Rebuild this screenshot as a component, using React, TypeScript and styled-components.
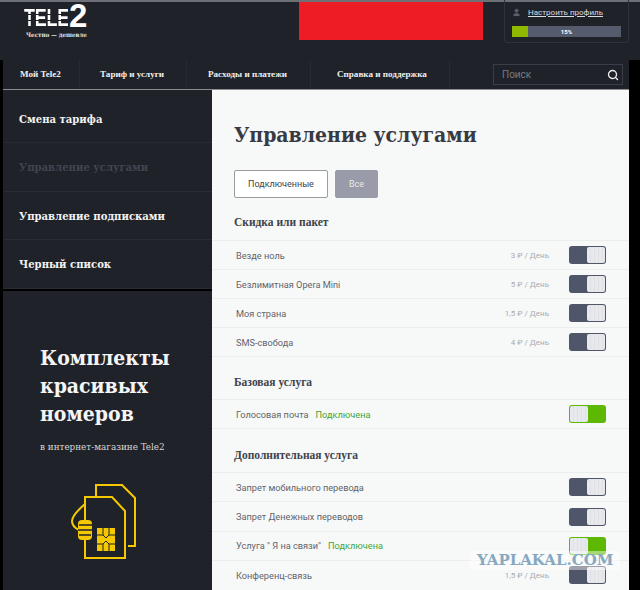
import styled, { createGlobalStyle } from "styled-components"
import { Search, User } from "lucide-react"

const GlobalStyle = createGlobalStyle`
    html, body {
        margin: 0;
        padding: 0;
        background: #000;
    }
    * {
        box-sizing: border-box;
    }
`;

const SLAB = `"DejaVu Serif Condensed", "DejaVu Serif", serif`;
const SERIF = `"Liberation Serif", serif`;
const SANS = `Roboto, "Noto Sans", sans-serif`;

const Page = styled.div`
    position: relative;
    width: 640px;
    height: 590px;
    overflow: hidden;
    background: #000;
    font-family: ${SANS};
`;

const TopBar = styled.header`
    display: flex;
    height: 60px;
    background: #1f2229;
    border-top: 2px solid #6d7076;
`;

const LogoBox = styled.div`
    width: 299px;
    padding: 2px 0 0 24px;
    color: #fff;
`;

const LogoMark = styled.div`
    display: flex;
    align-items: flex-end;
    height: 24px;
    font-family: "Liberation Sans", sans-serif;
    font-weight: 700;
    white-space: nowrap;
`;

const LogoTele = styled.span`
    flex: none;
    width: 57px;
    margin-right: -12px;
    font-size: 23px;
    line-height: 19px;
    letter-spacing: -0.3px;
    transform: scaleX(0.78);
    transform-origin: left bottom;
    background: repeating-linear-gradient(180deg, #fff 0 5px, #1f2229 5px 6px);
    background-clip: text;
    -webkit-background-clip: text;
    color: transparent;
`;

const LogoTwo = styled.span`
    font-size: 33px;
    line-height: 24px;
`;

const Slogan = styled.div`
    margin: 3px 0 0 2px;
    font-family: ${SLAB};
    font-size: 6.2px;
    font-weight: 700;
    color: #e6e6e6;
    white-space: nowrap;
`;

const RedBlock = styled.div`
    width: 184px;
    height: 38px;
    background: #ee1c25;
`;

const ProfileBox = styled.div`
    width: 125px;
    height: 43px;
    margin: -2px 0 0 21px;
    padding: 6px 7px 0;
    border: 1px solid #2f333c;
    border-top: 0;
    border-radius: 0 0 4px 4px;
`;

const ProfileRow = styled.div`
    display: flex;
    align-items: center;
    gap: 7px;
    height: 12px;
    padding-top: 1px;
    color: #5b6171;
`;

const ProfileLink = styled.a`
    font-size: 8px;
    color: #d9dbe0;
    text-decoration: underline;
    white-space: nowrap;
`;

const Progress = styled.div`
    position: relative;
    height: 11px;
    margin-top: 8px;
    background: #555b6d;
    color: #fff;
    font-size: 6px;
    font-weight: 700;
    line-height: 11px;
    text-align: center;
`;

const ProgressFill = styled.div`
    position: absolute;
    left: 0;
    top: 0;
    height: 100%;
    background: #8fb800;
`;

const Shell = styled.div`
    width: 626px;
    margin-left: 3px;
`;

const Nav = styled.nav`
    display: flex;
    align-items: stretch;
    height: 29px;
    background: #1f2229;
`;

const NavItem = styled.div<{ $width: number; $pad: number }>`
    width: ${(p) => p.$width}px;
    padding-left: ${(p) => p.$pad}px;
    border-right: 1px solid #272a32;
    font-family: ${SERIF};
    font-size: 9.1px;
    font-weight: 700;
    line-height: 29px;
    color: #f0f0f0;
    white-space: nowrap;
`;

const SearchBox = styled.div`
    display: flex;
    align-items: center;
    justify-content: space-between;
    width: 130px;
    height: 21px;
    margin: 4px 0 0 43px;
    padding: 0 3px 0 8px;
    border: 1px solid #3a3e48;
    font-size: 10px;
    color: #777b84;
`;

const Columns = styled.div`
    display: flex;
    border-top: 1px solid #8b8d91;
`;

const Sidebar = styled.aside`
    width: 209px;
    flex-shrink: 0;
`;

const Menu = styled.ul`
    margin: 0;
    padding: 0;
    list-style: none;
    background: #1f2229;
`;

const MenuItem = styled.li<{ $active?: boolean }>`
    height: 48.5px;
    padding-left: 16px;
    border-bottom: 1px solid #282b33;
    font-family: ${SLAB};
    font-size: 11.2px;
    font-weight: 700;
    line-height: 48px;
    color: ${(p) => (p.$active ? "#41454f" : "#f2f2f2")};
    &:first-child {
        height: 53px;
        line-height: 58px;
    }
`;

const Promo = styled.section`
    height: 302px;
    margin-top: 2px;
    padding: 53px 0 0 37px;
    background: #1f2229;
`;

const PromoTitle = styled.h2`
    margin: 0;
    font-family: ${SLAB};
    font-size: 21px;
    font-weight: 700;
    line-height: 28px;
    color: #f5f5f5;
`;

const PromoText = styled.p`
    margin: 13px 0 0;
    font-family: ${SLAB};
    font-size: 9.8px;
    color: #d6d6d6;
`;

const SimIcon = styled.svg`
    display: block;
    margin: 31px 0 0 30px;
`;

const Main = styled.main`
    flex: 1;
    height: 501px;
    padding-top: 31px;
    background: #f7f8f8;
`;

const Title = styled.h1`
    margin: 0 0 0 22px;
    height: 28px;
    font-family: ${SLAB};
    font-size: 21px;
    font-weight: 700;
    line-height: 28px;
    color: #373a42;
`;

const Tabs = styled.div`
    display: flex;
    gap: 7px;
    margin: 21px 0 0 22px;
`;

const Tab = styled.div<{ $filled?: boolean }>`
    height: 28px;
    padding: 0 13px;
    border: 1px solid ${(p) => (p.$filled ? "#9a9ba8" : "#9a9da3")};
    border-radius: 2px;
    background: ${(p) => (p.$filled ? "#9a9ba8" : "#fff")};
    font-size: 9px;
    line-height: 26px;
    color: ${(p) => (p.$filled ? "#e8e8ec" : "#40434a")};
`;

const SectionTitle = styled.h3<{ $top: number }>`
    margin: ${(p) => p.$top}px 0 0 22px;
    height: 18px;
    font-family: ${SERIF};
    font-size: 11.5px;
    font-weight: 700;
    line-height: 18px;
    color: #40434b;
`;

const RowList = styled.div<{ $gap: number }>`
    margin-top: ${(p) => p.$gap}px;
    border-top: 1px solid #eceded;
`;

const Row = styled.div`
    display: flex;
    align-items: center;
    height: 29px;
    padding: 0 23px 0 24px;
    border-bottom: 1px solid #eceded;
    font-size: 9.2px;
    color: #62656c;
`;

const TallRowList = styled(RowList)`
    ${Row} {
        height: 29.4px;
    }
`;

const RowName = styled.span`
    white-space: nowrap;
`;

const Connected = styled.span`
    margin-left: 7px;
    color: #3fa535;
`;

const Price = styled.span`
    margin-left: auto;
    font-size: 8px;
    color: #a9abb0;
    white-space: nowrap;
`;

const Toggle = styled.div<{ $on?: boolean; $priced?: boolean }>`
    display: flex;
    justify-content: ${(p) => (p.$on ? "flex-start" : "flex-end")};
    flex-shrink: 0;
    width: 37px;
    height: 18px;
    margin-left: ${(p) => (p.$priced ? "20px" : "auto")};
    padding: 1px;
    border-radius: 3px;
    background: ${(p) => (p.$on ? "#5cb800" : "#50566a")};
`;

const Knob = styled.div`
    width: 18px;
    height: 16px;
    border-radius: 2px;
    background: repeating-linear-gradient(90deg, #e8e9ec 0 3px, #e0e1e5 3px 4px);
`;

const Watermark = styled.div`
    position: absolute;
    left: 470px;
    top: 551px;
    padding: 1px 7px;
    background: rgba(255, 255, 255, 0.45);
    font-family: "DejaVu Serif", serif;
    font-size: 15px;
    font-weight: 700;
    line-height: 17px;
    color: #86a9c0;
`;

interface Service {
    name: string;
    price?: string;
    on?: boolean;
}

const discounts: Service[] = [
    { name: "Везде ноль", price: "3 ₽ / День" },
    { name: "Безлимитная Opera Mini", price: "5 ₽ / День" },
    { name: "Моя страна", price: "1,5 ₽ / День" },
    { name: "SMS-свобода", price: "4 ₽ / День" },
];

const base: Service[] = [{ name: "Голосовая почта", on: true }];

const extra: Service[] = [
    { name: "Запрет мобильного перевода" },
    { name: "Запрет Денежных переводов" },
    { name: "Услуга \" Я на связи\"", on: true },
    { name: "Конференц-связь", price: "1,5 ₽ / День" },
];

function ServiceRow({ service }: { service: Service }) {
    const { name, price, on } = service;
    return (
        <Row>
            <RowName>{name}</RowName>
            {on && <Connected>Подключена</Connected>}
            {price && <Price>{price}</Price>}
            <Toggle $on={on} $priced={!!price}><Knob /></Toggle>
        </Row>
    );
}

function SimCards() {
    return (
        <SimIcon width="70" height="80" viewBox="0 0 70 80" fill="none" stroke="#f5c800" strokeWidth="2">
            <path d="M26 14V2h26l13 13v48h-7" />
            <path d="M15 14h27l13 14v47H15z" />
            <path d="M15 21C8 27 2 33 2 38c0 4 3 7 7 9" />
            <rect x="8" y="37" width="14" height="20" rx="4" fill="#f5c800" stroke="none" />
            <path d="M9 42h14M8 47h14M9 52h12" stroke="#1f2229" strokeWidth="1.4" />
            <rect x="27" y="45" width="18" height="23" fill="#f5c800" stroke="none" />
            <path d="M27 52h6l3 3 3-3h6M27 61h6l3-3 3 3h6M33 45v7M39 45v7M33 61v7M39 61v7" stroke="#1f2229" strokeWidth="1" />
        </SimIcon>
    );
}

export default function App() {
    return (
        <Page>
            <GlobalStyle />
            <TopBar>
                <LogoBox>
                    <LogoMark>
                        <LogoTele>TELE</LogoTele>
                        <LogoTwo>2</LogoTwo>
                    </LogoMark>
                    <Slogan>Честно — дешевле</Slogan>
                </LogoBox>
                <RedBlock />
                <ProfileBox>
                    <ProfileRow>
                        <User size={9} fill="#5b6171" />
                        <ProfileLink>Настроить профиль</ProfileLink>
                    </ProfileRow>
                    <Progress>
                        <ProgressFill style={{ width: "15%" }} />
                        15%
                    </Progress>
                </ProfileBox>
            </TopBar>
            <Shell>
                <Nav>
                    <NavItem $width={77} $pad={17}>Мой Tele2</NavItem>
                    <NavItem $width={107} $pad={20}>Тариф и услуги</NavItem>
                    <NavItem $width={124} $pad={21}>Расходы и платежи</NavItem>
                    <NavItem $width={139} $pad={26}>Справка и поддержка</NavItem>
                    <SearchBox>
                        Поиск
                        <Search size={12} color="#f0f0f0" strokeWidth={2.6} />
                    </SearchBox>
                </Nav>
                <Columns>
                    <Sidebar>
                        <Menu>
                            <MenuItem>Смена тарифа</MenuItem>
                            <MenuItem $active>Управление услугами</MenuItem>
                            <MenuItem>Управление подписками</MenuItem>
                            <MenuItem>Черный список</MenuItem>
                        </Menu>
                        <Promo>
                            <PromoTitle>Комплекты<br />красивых<br />номеров</PromoTitle>
                            <PromoText>в интернет-магазине Tele2</PromoText>
                            <SimCards />
                        </Promo>
                    </Sidebar>
                    <Main>
                        <Title>Управление услугами</Title>
                        <Tabs>
                            <Tab>Подключенные</Tab>
                            <Tab $filled>Все</Tab>
                        </Tabs>
                        <SectionTitle $top={15}>Скидка или пакет</SectionTitle>
                        <RowList $gap={9}>
                            {discounts.map((s) => <ServiceRow key={s.name} service={s} />)}
                        </RowList>
                        <SectionTitle $top={16}>Базовая услуга</SectionTitle>
                        <RowList $gap={8}>
                            {base.map((s) => <ServiceRow key={s.name} service={s} />)}
                        </RowList>
                        <SectionTitle $top={17}>Дополнительная услуга</SectionTitle>
                        <TallRowList $gap={8}>
                            {extra.map((s) => <ServiceRow key={s.name} service={s} />)}
                        </TallRowList>
                    </Main>
                </Columns>
            </Shell>
            <Watermark>YAPLAKAL.COM</Watermark>
        </Page>
    );
}
